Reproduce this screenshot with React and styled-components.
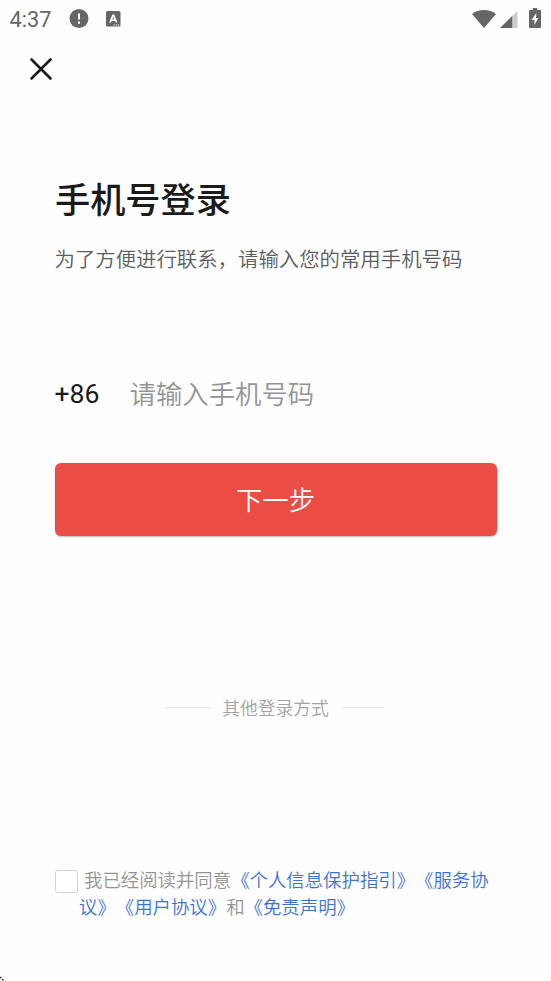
import React from 'react';
import styled, { createGlobalStyle } from 'styled-components';

const GlobalStyle = createGlobalStyle`
  *, *::before, *::after { box-sizing: border-box; }
  html, body { margin: 0; background: #fefefe; }
  body { font-family: "Noto Sans CJK SC", sans-serif; font-weight: 350; overflow: hidden; }
  h1, p { margin: 0; }
  button, input { font: inherit; border: 0; padding: 0; background: none; }
  svg { display: block; flex: none; }
`;

const Screen = styled.main`
  position: relative;
  width: 551px;
  height: 981px;
  display: flex;
  flex-direction: column;
  background: #fefefe;
  overflow: hidden;
`;

const StatusBar = styled.header`
  height: 38px;
  flex: none;
  display: flex;
  align-items: center;
  padding: 0 10px 0 9px;
  color: #666;
`;

const Clock = styled.span`
  width: 60px;
  font-family: Roboto, sans-serif;
  font-weight: 400;
  font-size: 21.8px;
  line-height: 38px;
  padding: 1px 0 0 0.5px;
`;

const Notifications = styled.div`
  display: flex;
  align-items: center;
  gap: 17px;
`;

const Indicators = styled.div`
  margin-left: auto;
  display: flex;
  align-items: center;
`;

const SignalSlot = styled.span`
  margin: 1px 11px 0 4px;
`;

const BatterySlot = styled.span`
  margin-top: -2px;
`;

const CloseButton = styled.button`
  width: 22px;
  height: 22px;
  margin: 20px 0 0 30px;
  flex: none;
`;

const Content = styled.section`
  padding: 92px 54.5px 0 54.5px;
  display: flex;
  flex-direction: column;
`;

const Title = styled.h1`
  padding-left: 0.5px;
  font-size: 35.2px;
  font-weight: 500;
  line-height: 52px;
  color: #1a1a1a;
`;

const Subtitle = styled.p`
  margin-top: 19px;
  font-size: 20.4px;
  line-height: 30px;
  color: #5c5c5c;
  white-space: nowrap;
`;

const PhoneRow = styled.label`
  margin-top: 99px;
  height: 40px;
  display: flex;
  align-items: center;
`;

const CountryCode = styled.span`
  width: 75px;
  padding-top: 4px;
  font-family: Roboto, sans-serif;
  font-weight: 400;
  font-size: 26.6px;
  line-height: 40px;
  color: #1a1a1a;
`;

const PhoneInput = styled.input`
  flex: 1;
  min-width: 0;
  height: 40px;
  font-size: 26.4px;
  outline: none;
  &::placeholder { color: #949494; opacity: 1; }
`;

const NextButton = styled.button`
  margin-top: 51px;
  height: 73px;
  padding-bottom: 2px;
  border-radius: 6px;
  background: #eb4d44;
  color: #fff;
  font-size: 26.4px;
  line-height: 71px;
  box-shadow: 0 1px 2px rgba(0, 0, 0, 0.25);
`;

const OtherMethods = styled.div`
  margin-top: 158px;
  height: 27px;
  display: flex;
  align-items: center;
  justify-content: center;
  gap: 12px;
  font-size: 17.8px;
  line-height: 27px;
  color: #a3a3a3;
  &::before, &::after {
    content: "";
    width: 44px;
    height: 1px;
    background: #e6e6e6;
  }
`;

const Consent = styled.div`
  margin-top: 145px;
  display: flex;
`;

const Checkbox = styled.input`
  appearance: none;
  width: 23.5px;
  height: 23px;
  margin: 4px 1px 0 0;
  flex: none;
  border: 1.5px solid #d4d4d4;
  border-radius: 3px;
  background: #fff;
`;

const ConsentText = styled.p`
  width: 420px;
  font-size: 18.4px;
  line-height: 27.4px;
  color: #949494;
  text-indent: 5px;
  text-spacing-trim: space-all;
  white-space: nowrap;
`;

const PolicyLink = styled.span`
  color: #3f72d0;
`;

const PointerTip = styled.svg`
  position: absolute;
  left: 0;
  bottom: 0;
`;

const AlertIcon = () => (
  <svg width="20" height="20" viewBox="0 0 20 20">
    <circle cx="10" cy="9.5" r="9.5" fill="#666" />
    <path d="M10 4.5v6M10 12.5v2.2" stroke="#fefefe" strokeWidth="2" />
  </svg>
);

const KeyboardIcon = () => (
  <svg width="15" height="16" viewBox="0 0 15 16">
    <rect width="14.5" height="15.5" rx="1.5" fill="#666" />
    <path d="M4 11.5 7 4.5h.6l3 7M5.2 9.2h4.2" fill="none" stroke="#fefefe" strokeWidth="1.8" />
    <path d="M7.5 14h1.2M9.7 14h1.2M11.8 14H13" stroke="#fefefe" strokeWidth="1.2" />
  </svg>
);

const WifiIcon = () => (
  <svg width="24" height="19" viewBox="0 0 24 19">
    <path d="M0 4C6.5-1.2 17.5-1.2 24 4L12 18Z" fill="#666" />
  </svg>
);

const SignalIcon = () => (
  <svg width="18" height="18" viewBox="0 0 18 18">
    <path d="M0 17 17.5 0v17Z" fill="#ccc" />
    <path d="M0 17 12.2 5.1V17Z" fill="#666" />
  </svg>
);

const BatteryIcon = () => (
  <svg width="12" height="20" viewBox="0 0 12 20">
    <path d="M3.8 0h4.4v2H11q1 0 1 1v16q0 1-1 1H1q-1 0-1-1V3q0-1 1-1h2.8Z" fill="#666" />
    <path d="M7.3 5 2.7 12h2.7v5L9.4 10H7Z" fill="#fefefe" />
  </svg>
);

export default function App() {
  return (
    <>
      <GlobalStyle />
      <Screen>
        <StatusBar>
          <Clock>4:37</Clock>
          <Notifications>
            <AlertIcon />
            <KeyboardIcon />
          </Notifications>
          <Indicators>
            <WifiIcon />
            <SignalSlot><SignalIcon /></SignalSlot>
            <BatterySlot><BatteryIcon /></BatterySlot>
          </Indicators>
        </StatusBar>
        <CloseButton aria-label="关闭">
          <svg width="22" height="22" viewBox="0 0 22 22">
            <path d="m1.5 1.5 19 19m0-19-19 19" stroke="#1a1a1a" strokeWidth="2.6" strokeLinecap="round" />
          </svg>
        </CloseButton>
        <Content>
          <Title>手机号登录</Title>
          <Subtitle>为了方便进行联系，请输入您的常用手机号码</Subtitle>
          <PhoneRow>
            <CountryCode>+86</CountryCode>
            <PhoneInput type="tel" placeholder="请输入手机号码" />
          </PhoneRow>
          <NextButton>下一步</NextButton>
          <OtherMethods>其他登录方式</OtherMethods>
          <Consent>
            <Checkbox type="checkbox" aria-label="同意协议" />
            <ConsentText>
              我已经阅读并同意<PolicyLink>《个人信息保护指引》</PolicyLink>
              <PolicyLink>《服务协<br />议》</PolicyLink>
              <PolicyLink>《用户协议》</PolicyLink>和<PolicyLink>《免责声明》</PolicyLink>
            </ConsentText>
          </Consent>
        </Content>
        <PointerTip width="5" height="5" viewBox="0 0 5 5">
          <path d="m0 1 4 4" stroke="#222" strokeWidth="1.2" strokeDasharray="2 1" />
        </PointerTip>
      </Screen>
    </>
  );
}
